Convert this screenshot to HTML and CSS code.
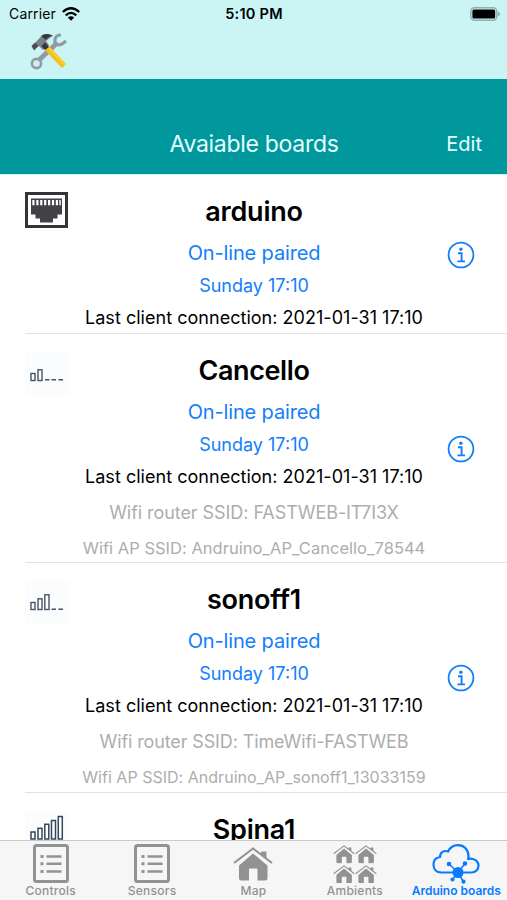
FILE: index.html
```html
<!DOCTYPE html>
<html lang="en">
<head>
<meta charset="utf-8">
<title>Arduino boards</title>
<link rel="stylesheet" href="styles.css">
</head>
<body>
<svg class="defs" aria-hidden="true">
  <symbol id="info" viewBox="0 0 28 28">
    <circle cx="14" cy="14" r="12.400" fill="none" stroke="currentColor" stroke-width="1.800"/>
    <circle cx="13.900" cy="8.200" r="1.700" fill="currentColor"/>
    <path d="M11 12.200h3.600v8M10.400 20.400h7.600" fill="none" stroke="currentColor" stroke-width="1.900"/>
  </symbol>
  <symbol id="list" viewBox="0 0 36 39">
    <rect x="1.500" y="1.500" width="33" height="36" rx="2" fill="none" stroke="currentColor" stroke-width="3"/>
    <path d="M7.500 12.500h3M7.500 19.700h3M7.500 27.500h3" stroke="currentColor" stroke-width="3"/>
    <path d="M13.500 12.500h15M13.500 19.700h15M13.500 27.500h15" stroke="currentColor" stroke-width="2.600"/>
  </symbol>
  <symbol id="house" viewBox="0 0 40 34">
    <path d="M20 6.500 34.500 18.500V31q0 2.500-2.500 2.500H24.500V22.500q0-1-1-1H17q-1 0-1 1v11H8.500Q6 33.500 6 31V18.500Z" fill="currentColor"/>
    <path d="M1 16 20 1.500 39 16" fill="none" stroke="currentColor" stroke-width="2"/>
    <path d="M28 4.500h5.500v7l-5.500-4z" fill="currentColor"/>
  </symbol>
</svg>
<div class="screen">
  <header class="top">
    <div class="status">
      <div class="carrier">Carrier
        <svg width="18" height="14" viewBox="0 0 18 14"><g fill="none" stroke="#000" stroke-width="2.300"><path d="M.8 5Q9-2.500 17.200 5"/><path d="M3.700 8.300Q9 3.500 14.300 8.300"/></g><path d="M5.800 10.400Q9 7.900 12.200 10.400L9 13.700Z"/></svg>
      </div>
      <div class="time">5:10 PM</div>
      <svg class="battery" width="31" height="14" viewBox="0 0 31 14"><rect x=".8" y=".8" width="26" height="12.400" rx="3.600" fill="none" stroke="#8fb0ae" stroke-width="1.500"/><rect x="2.400" y="2.500" width="22.800" height="9" rx="1.500"/><path d="M28 4.500q2 .8 2 2.500t-2 2.500z" fill="#8fb0ae"/></svg>
    </div>
    <svg class="tools" width="38" height="38" viewBox="0 0 38 38">
      <path d="M9 28 27 11" stroke="#929ba5" stroke-width="5"/>
      <circle cx="7.500" cy="30.500" r="4.600" fill="#d0eeee" stroke="#929ba5" stroke-width="2.600"/>
      <path d="M32 2Q25 2 26 9.500Q30 15 37 8" fill="none" stroke="#929ba5" stroke-width="3.200"/>
      <path d="M16 13 35 33" stroke="#f8bd20" stroke-width="5.800"/>
      <path d="M18 13 36 32" stroke="#ffd33a" stroke-width="1.600"/>
      <path d="M6 10 12 3.500Q17-1 24 2.500L17 8l3 4-6 5-4-4-4 2z" fill="#7b8088"/>
      <path d="M12 3Q17-1 24 3Q19 3 17 7Z" fill="#35383e"/>
      <path d="M2.500 13 6 9.500 9.500 13 5 17.500Z" fill="#4b4f55"/>
      <path d="M12.500 13 16 9.500 20 14 16 17Z" fill="#33363b"/>
    </svg>
  </header>
  <div class="navbar">
    <h1 class="nav-title">Avaiable boards</h1>
    <span class="edit">Edit</span>
  </div>
  <main class="list">
    <section class="row wired">
      <svg class="port" width="43" height="36" viewBox="0 0 43 36"><rect x="1.500" y="1.500" width="40" height="33" fill="#fff" stroke="#333437" stroke-width="3"/><path d="M6 6.500h31v16h-4.500v4H28v4H15v-4h-4.500v-4H6z" fill="#414245"/><path d="M7.300 8h2.200v5.200H7.300zm4 0h2.200v5.200h-2.200zm3.900 0h2.200v5.200h-2.200zm3.900 0h2.200v5.200h-2.200zm3.900 0h2.200v5.200h-2.200zm3.900 0h2.200v5.200h-2.200zm3.900 0h2.200v5.200h-2.200zm3.500 0h1.500v5.200h-1.500z" fill="#fff"/></svg>
      <div class="body">
        <h2 class="name">arduino</h2>
        <p class="state">On-line paired</p>
        <p class="when">Sunday 17:10</p>
        <p class="last">Last client connection: 2021-01-31 17:10</p>
      </div>
      <svg class="info"><use href="#info"/></svg>
    </section>
    <section class="row wifi-short">
      <svg class="signal" width="43" height="43" viewBox="0 0 43 43"><g fill="#fff" stroke="#455566" stroke-width="1.400"><rect x="6" y="21.500" width="4" height="7"/><rect x="13" y="17.800" width="4" height="10.700"/></g><path d="M20 27.800h4.500M26.500 27.800H31M33.500 27.800H38" stroke="#455566" stroke-width="1.600"/></svg>
      <div class="body">
        <h2 class="name tight">Cancello</h2>
        <p class="state">On-line paired</p>
        <p class="when">Sunday 17:10</p>
        <p class="last">Last client connection: 2021-01-31 17:10</p>
        <p class="router">Wifi router SSID: FASTWEB-IT7I3X</p>
        <p class="ap">Wifi AP SSID: Andruino_AP_Cancello_78544</p>
      </div>
      <svg class="info"><use href="#info"/></svg>
    </section>
    <section class="row wifi">
      <svg class="signal" width="43" height="43" viewBox="0 0 43 43"><g fill="#fff" stroke="#455566" stroke-width="1.400"><rect x="6" y="21.500" width="4" height="7"/><rect x="13" y="17.800" width="4" height="10.700"/><rect x="19.800" y="13.800" width="4.200" height="14.700"/></g><path d="M26.500 28.300H31M33.500 28.300H38" stroke="#455566" stroke-width="1.600"/></svg>
      <div class="body">
        <h2 class="name">sonoff1</h2>
        <p class="state">On-line paired</p>
        <p class="when">Sunday 17:10</p>
        <p class="last">Last client connection: 2021-01-31 17:10</p>
        <p class="router long">Wifi router SSID: TimeWifi-FASTWEB</p>
        <p class="ap long">Wifi AP SSID: Andruino_AP_sonoff1_13033159</p>
      </div>
      <svg class="info"><use href="#info"/></svg>
    </section>
    <section class="row wifi">
      <svg class="signal" width="43" height="43" viewBox="0 0 43 43"><g fill="#fff" stroke="#34475a" stroke-width="1.500"><rect x="6" y="21" width="4" height="7"/><rect x="13" y="17.300" width="4" height="10.700"/><rect x="19.800" y="13.300" width="4" height="14.700"/><rect x="26.500" y="9.500" width="4" height="18.500"/><rect x="33.300" y="5.500" width="4" height="22.500"/></g></svg>
      <div class="body"><h2 class="name">Spina1</h2></div>
    </section>
  </main>
  <nav class="tabs">
    <div class="tab"><svg class="ico-list"><use href="#list"/></svg><span>Controls</span></div>
    <div class="tab"><svg class="ico-list"><use href="#list"/></svg><span>Sensors</span></div>
    <div class="tab"><svg class="ico-house"><use href="#house"/></svg><span>Map</span></div>
    <div class="tab"><div class="village"><svg><use href="#house"/></svg><svg><use href="#house"/></svg><svg><use href="#house"/></svg><svg><use href="#house"/></svg></div><span>Ambients</span></div>
    <div class="tab active"><svg class="ico-cloud" viewBox="0 0 48 40"><path d="M22 28.500H9.500C4 28.500 1.500 25 1.500 20.500c0-4 2.500-7 6.500-7.500 0-5 4-7 8-5.500C18 3.500 22 1.200 26 1.200c6 0 10.500 4.500 10.500 11 0 1.300-.2 2-.3 2.600C42 14 46.500 17 46.500 21.500c0 4-3 7-7 7H30" fill="none" stroke="currentColor" stroke-width="2.200"/><path d="M26 28.500 17 20M26 28.500 33 19.500M26 28.500 20.500 35.500M26 28.500 31.500 38" stroke="currentColor" stroke-width="1.500"/><g fill="currentColor"><circle cx="26" cy="28.500" r="5.500"/><circle cx="17" cy="20" r="2.300"/><circle cx="33" cy="19.500" r="2.300"/><circle cx="20.500" cy="35.500" r="2.100"/><circle cx="31.500" cy="37.700" r="2.100"/></g></svg><span>Arduino boards</span></div>
  </nav>
</div>
</body>
</html>
```
FILE: styles.css
```css
* { box-sizing: border-box; margin: 0; padding: 0; }
body { font-family: Inter, "Liberation Sans", sans-serif; color: #000; background: #fff; }
.defs { position: absolute; width: 0; height: 0; }
.screen { width: 507px; height: 900px; display: flex; flex-direction: column; overflow: hidden; }
.top { height: 79px; flex: none; background: #cbf5f5; }
.status { display: grid; grid-template-columns: 1fr auto 1fr; align-items: center; height: 27px; padding: 0 6px 0 9px; }
.carrier { display: flex; align-items: center; gap: 6px; font-size: 14px; letter-spacing: 0.15px; }
.time { font-size: 14.500px; font-weight: 600; letter-spacing: 0.250px; margin-right: 2px; }
.battery { justify-self: end; }
.tools { display: block; margin: 6px 0 0 29px; }
.navbar { height: 96px; flex: none; display: grid; grid-template-columns: 1fr auto 1fr; align-items: center; padding: 34px 25px 0 26px; background: #00979d; color: #e3ffff; border-bottom: 1px solid #c8f7f8; }
.nav-title { grid-column: 2; font-size: 23px; font-weight: 400; letter-spacing: -0.300px; }
.edit { justify-self: end; font-size: 20px; }
.list { flex: 1; min-height: 0; overflow: hidden; }
.row { display: grid; grid-template-columns: 45px 1fr 27px; margin-left: 25px; padding: 17px 33px 0 0; border-bottom: 1px solid #e2e2e4; }
.wired { height: 159px; }
.wifi-short { height: 229px; }
.wifi { height: 230px; }
.signal { margin-top: 1px; background: #fbfcfe; }
.body { display: flex; flex-direction: column; align-items: center; white-space: nowrap; margin-left: -5px; margin-right: 4px; }
.name { font-size: 27px; line-height: 40px; font-weight: 600; letter-spacing: -0.200px; }
.tight { letter-spacing: -0.400px; }
.state { font-size: 20px; line-height: 42px; color: #147efb; letter-spacing: -0.150px; }
.when { font-size: 18px; line-height: 24px; color: #147efb; }
.last { margin-top: 4px; font-size: 18px; line-height: 32px; letter-spacing: 0.030px; }
.router { font-size: 18px; line-height: 39px; color: #adadad; letter-spacing: -0.060px; }
.router.long { letter-spacing: -0.120px; }
.ap { font-size: 16.500px; line-height: 32px; color: #adadad; letter-spacing: 0.020px; }
.ap.long { font-size: 16px; }
.info { width: 28px; height: 28px; align-self: center; margin-bottom: 17px; color: #147efb; }
.tabs { height: 60px; flex: none; display: grid; grid-template-columns: repeat(5, 1fr); background: #f6f6f7; border-top: 1px solid #c9c9ca; }
.tab { display: flex; flex-direction: column; align-items: center; justify-content: space-between; padding: 3px 0 2px; color: #929292; font-size: 12px; line-height: 14px; font-weight: 500; letter-spacing: 0.250px; white-space: nowrap; }
.active { color: #087aff; font-weight: 600; letter-spacing: 0; }
.ico-list { width: 36px; height: 39px; }
.ico-house { width: 40px; height: 34px; margin-top: 3px; }
.village { display: grid; grid-template-columns: 22px 22px; gap: 1px 0; margin-top: 1px; }
.village svg { width: 22px; height: 18.500px; }
.ico-cloud { width: 48px; height: 40px; }
```
